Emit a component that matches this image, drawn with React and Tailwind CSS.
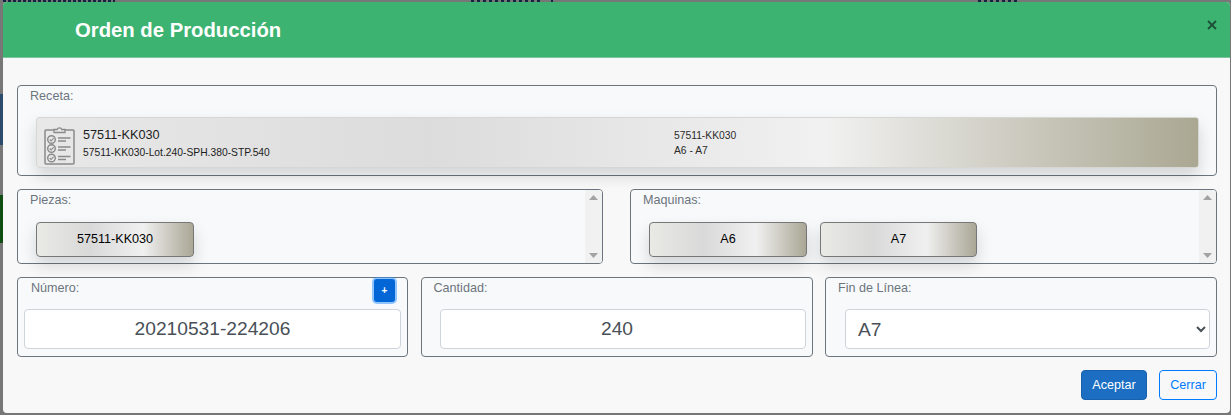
const FONT = "font-['Liberation_Sans',Arial,sans-serif]";

function ClipboardIcon() {
  const rows = [14.5, 23.5, 33];
  return (
    <svg width="31" height="40" viewBox="0 0 31 40" fill="none" stroke="#8a8a8a" className="shrink-0 mt-[4px]">
      <path d="M10 5H2a1 1 0 0 0-1 1v32a1 1 0 0 0 1 1h27a1 1 0 0 0 1-1V6a1 1 0 0 0-1-1h-8" strokeWidth="1.5" />
      <path d="M10 7.5V4.5h3.2a2.4 2.4 0 0 1 4.6 0H21v3z" strokeWidth="1.3" />
      {rows.map((y) => (
        <g key={y}>
          <circle cx="7.5" cy={y} r="3.8" strokeWidth="1.4" />
          <path d={`M5.7 ${y}l1.4 1.5 2.6-2.8`} strokeWidth="1.1" />
          <path d={`M14 ${y - 1.5}h12.5M14 ${y + 1.5}h8`} strokeWidth="1.4" />
        </g>
      ))}
    </svg>
  );
}

function ScrollBar() {
  return (
    <div className="w-[17px] h-full bg-[#f1f1f1] flex flex-col items-center justify-between py-[5px] shrink-0 rounded-r-[3px]">
      <svg width="9" height="5" viewBox="0 0 9 5"><path d="M4.5 0L9 5H0z" fill="#a3a3a3" /></svg>
      <svg width="9" height="5" viewBox="0 0 9 5"><path d="M0 0h9L4.5 5z" fill="#a3a3a3" /></svg>
    </div>
  );
}

function Chip({ label, width = "w-[158px]" }) {
  return (
    <div className={`${width} h-[35px] flex items-center justify-center border border-[#777] rounded-[4px] text-[12.6px] text-black shadow-[0_8px_16px_rgba(0,0,0,0.15)] bg-[linear-gradient(to_right,#e9e9e5,#d9d9d9_34%,#f0f0f0_68%,#aaa796)]`}>
      {label}
    </div>
  );
}

function ListBox({ title, width, children }) {
  return (
    <div className={`${width} h-[75px] border border-[#6c757d] rounded-[4px] bg-[#f8f9fb] flex`}>
      <div className="flex-1 min-w-0">
        <div className="h-[19px] pl-[12px] text-[12.6px] leading-[21px] text-[#6c757d]">{title}</div>
        <div className="mt-[13px] pl-[18px] flex gap-[13px]">{children}</div>
      </div>
      <ScrollBar />
    </div>
  );
}

const inputClass =
  "h-[40px] bg-white border border-[#ced4da] rounded-[4px] text-[19.2px] text-[#495057] text-center outline-none";

export default function App() {
  return (
    <div className={`relative w-full h-[415px] overflow-hidden bg-[#777] pl-[3px] pt-[2px] ${FONT}`}>
      <div className="absolute left-0 top-[94px] w-[3px] h-[51px] bg-[#2c4a6c]" />
      <div className="absolute left-0 top-[195px] w-[3px] h-[48px] bg-[#0f4d10]" />
      <div className="absolute left-[3px] top-0 w-[112px] h-[2px] bg-[repeating-linear-gradient(to_right,#12233f_0_3px,#777_3px_5px)]" />
      <div className="absolute left-[471px] top-0 w-[70px] h-[2px] bg-[repeating-linear-gradient(to_right,#12233f_0_3px,#777_3px_6px)]" />
      <div className="absolute left-[551px] top-0 w-[2px] h-[2px] bg-[#12233f]" />
      <div className="absolute left-[978px] top-0 w-[40px] h-[2px] bg-[repeating-linear-gradient(to_right,#12233f_0_3px,#777_3px_6px)]" />

      <div className="relative w-[1227px] h-[411px] rounded-[4px] bg-[#f8f8f8] overflow-hidden flex flex-col">
        <header className="h-[56px] shrink-0 bg-[#3cb371] border-b border-[#dee2e6]/40 flex justify-between">
          <h1 className="pl-[72px] pt-[16px] text-[20.3px] leading-[24px] font-bold text-white">Orden de Producción</h1>
          <svg width="10" height="10" viewBox="0 0 10 10" className="mr-[13px] mt-[18px]" stroke="#1d4f38" strokeWidth="1.8">
            <path d="M1 1l8 8M9 1L1 9" />
          </svg>
        </header>

        <main className="flex-1 px-[14px] pt-[27px] flex flex-col text-[#212529]">
          <section className="w-[1200px] h-[91px] border border-[#6c757d] rounded-[4px] bg-[#f8f9fb]">
            <div className="h-[19px] pl-[12px] text-[12.6px] leading-[21px] text-[#6c757d]">Receta:</div>
            <div className="ml-[18px] mt-[12px] w-[1163px] h-[51px] border border-[#d6d6d2] rounded-[3px] flex items-center shadow-[0_8px_16px_rgba(0,0,0,0.15)] bg-[linear-gradient(to_right,#e8e8e8,#dcdcdc_34%,#f1f1f1_68%,#aaa792)]">
              <div className="w-[637px] shrink-0 flex items-center pl-[7px]">
                <ClipboardIcon />
                <div className="ml-[8px] mt-[2px] flex flex-col">
                  <span className="text-[12.7px] leading-[16px] text-[#1c1c1c]">57511-KK030</span>
                  <span className="mt-[3px] text-[10.3px] leading-[14px] text-[#1c1c1c]">57511-KK030-Lot.240-SPH.380-STP.540</span>
                </div>
              </div>
              <div className="flex flex-col text-[10.3px] leading-[15px] text-[#2b2b2b]">
                <span>57511-KK030</span>
                <span>A6 - A7</span>
              </div>
            </div>
          </section>

          <div className="mt-[13px] w-[1200px] flex justify-between">
            <ListBox title="Piezas:" width="w-[586px]">
              <Chip label="57511-KK030" />
            </ListBox>
            <ListBox title="Maquinas:" width="w-[587px]">
              <Chip label="A6" />
              <Chip label="A7" width="w-[157px]" />
            </ListBox>
          </div>

          <div className="mt-[13px] w-[1200px] flex justify-between">
            <div className="w-[391px] h-[80px] border border-[#6c757d] rounded-[4px] bg-[#f8f9fb]">
              <div className="h-[31px] flex justify-between">
                <span className="pl-[13px] text-[12.6px] leading-[21px] text-[#6c757d]">Número:</span>
                <button className="mr-[12px] mt-[1px] w-[21px] h-[23px] rounded-[3px] bg-[#0366d6] text-white text-[10px] font-bold shadow-[0_0_0_2px_rgba(38,143,255,0.5)]">+</button>
              </div>
              <input readOnly value="20210531-224206" className={`block ml-[6px] w-[377px] ${inputClass}`} />
            </div>
            <div className="w-[392px] h-[80px] border border-[#6c757d] rounded-[4px] bg-[#f8f9fb]">
              <div className="h-[31px] pl-[12px] text-[12.6px] leading-[21px] text-[#6c757d]">Cantidad:</div>
              <input readOnly value="240" className={`block ml-[18px] w-[366px] pr-[11px] ${inputClass}`} />
            </div>
            <div className="w-[392px] h-[80px] border border-[#6c757d] rounded-[4px] bg-[#f8f9fb]">
              <div className="h-[31px] pl-[12px] text-[12.6px] leading-[21px] text-[#6c757d]">Fin de Línea:</div>
              <select defaultValue="A7" className="block ml-[19px] w-[365px] h-[40px] bg-white border border-[#ced4da] rounded-[4px] text-[19.2px] text-[#495057] pl-[8px] outline-none">
                <option>A6</option>
                <option>A7</option>
              </select>
            </div>
          </div>

          <div className="mt-[13px] w-[1200px] flex justify-end gap-[12px]">
            <button className="w-[66px] h-[30px] rounded-[4px] bg-[#1b6ec2] border border-[#1861ac] text-white text-[12.6px]">Aceptar</button>
            <button className="w-[58px] h-[30px] rounded-[4px] border border-[#007bff] text-[#007bff] text-[12.6px]">Cerrar</button>
          </div>
        </main>
      </div>
    </div>
  );
}
